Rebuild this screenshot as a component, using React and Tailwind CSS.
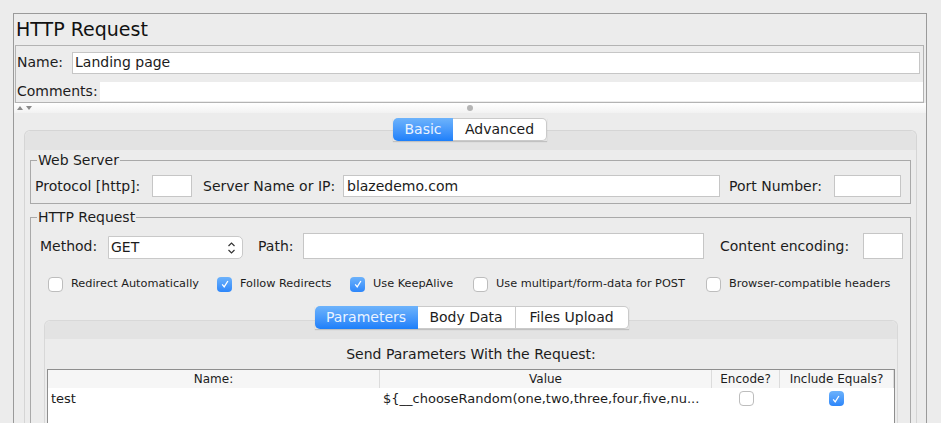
import React from "react";

const Check = ({ checked }) => (
  <span
    className={
      checked
        ? "flex h-[15px] w-[15px] shrink-0 items-center justify-center rounded-[4px] bg-linear-to-b from-[#6cb2fb] to-[#2c86fa]"
        : "h-[15px] w-[15px] shrink-0 rounded-[4px] border border-[#bdbdbd] bg-white"
    }
  >
    {checked && (
      <svg width="10" height="10" viewBox="0 0 10 10">
        <path d="M2.2 5.4 L4.2 7.8 L7.9 2" stroke="white" strokeWidth="1.3" fill="none" />
      </svg>
    )}
  </span>
);

const Option = ({ checked, label, width }) => (
  <div className={`flex items-center gap-[8px] ${width}`}>
    <Check checked={checked} />
    <span className="whitespace-nowrap">{label}</span>
  </div>
);

const App = () => {
  return (
    <div className="h-[423px] w-[941px] overflow-hidden bg-[#ececec] font-['DejaVu_Sans',sans-serif] text-[13px] text-[#1c1c1c]">
      <div className="ml-[13px] mt-[13px] h-[410px] w-[914px] border-x border-t border-[#9a9a9a]">
        {/* Title */}
        <div className="h-[31px] pl-[2px] pt-[3px] text-[19px] leading-[24px] text-[#111]">
          HTTP Request
        </div>

        {/* Name / Comments */}
        <div className="ml-[1px] mr-[2px] h-[58px] border border-[#b3b3b3]">
          <div className="flex h-[32px] items-center pl-[1px] pr-[3px] pt-[1px]">
            <span className="w-[55px] text-[14px]">Name:</span>
            <div className="flex h-[22px] flex-1 items-center border border-[#c6c6c6] bg-white pl-[2px] text-[14px]">
              Landing page
            </div>
          </div>
          <div className="mt-[4px] flex h-[19px] items-center pl-[1px]">
            <span className="w-[83px] text-[14px]">Comments:</span>
            <div className="h-full flex-1 bg-white" />
          </div>
        </div>

        {/* Splitter */}
        <div className="flex h-[10px] items-center bg-linear-to-b from-white to-[#f2f2f2] pl-[3px]">
          <svg width="16" height="6" viewBox="0 0 16 6">
            <path d="M0 5 L3 1 L6 5 Z" fill="#8a8a8a" />
            <path d="M9 1 L15 1 L12 5 Z" fill="#8a8a8a" />
          </svg>
          <div className="ml-[434px] h-[6px] w-[6px] rounded-full bg-[#b5b5b5]" />
        </div>

        {/* Basic / Advanced tabs */}
        <div className="relative z-10 mt-[5px] flex justify-center">
          <div className="flex h-[23px] text-[14px] shadow-[0_1px_1px_rgba(0,0,0,0.15)]">
            <div className="flex w-[60px] items-center justify-center rounded-l-[5px] bg-linear-to-b from-[#6db3fb] to-[#1c7ffa] text-[#eaf3ff]">
              Basic
            </div>
            <div className="flex w-[94px] items-center justify-center rounded-r-[5px] border border-l-0 border-[#cacaca] bg-white">
              Advanced
            </div>
          </div>
        </div>

        {/* Tab panel */}
        <div className="-mt-[11px] ml-[10px] mr-[9px] h-[300px] rounded-t-[6px] border border-b-0 border-[#d5d5d5]">
          <div className="h-[19px] rounded-t-[6px] bg-[#e3e3e3]" />
          <div className="px-[5px]">
            {/* Web Server */}
            <fieldset className="mt-[2px] border border-[#a9a9a9] pb-[6px] pl-[4px] pr-[9px]">
              <legend className="ml-[2px] px-[1px] text-[14px] leading-[16px]">Web Server</legend>
              <div className="mt-[7px] flex h-[22px] items-center text-[14px]">
                <span className="w-[117px] whitespace-nowrap">Protocol [http]:</span>
                <div className="h-[22px] w-[40px] border border-[#c6c6c6] bg-white" />
                <span className="ml-[11px] w-[140px] whitespace-nowrap">Server Name or IP:</span>
                <div className="flex h-[22px] w-[377px] items-center border border-[#c6c6c6] bg-white pl-[3px]">
                  blazedemo.com
                </div>
                <span className="ml-[9px] w-[105px] whitespace-nowrap">Port Number:</span>
                <div className="h-[22px] flex-1 border border-[#c6c6c6] bg-white" />
              </div>
            </fieldset>

            {/* HTTP Request */}
            <fieldset className="mt-[5px] h-[240px] border border-[#a9a9a9] pl-[9px] pr-[7px]">
              <legend className="ml-[-3px] px-[1px] text-[14px] leading-[16px]">HTTP Request</legend>
              <div className="mt-[8px] flex h-[26px] items-center text-[14px]">
                <span className="w-[68px]">Method:</span>
                <div className="mt-[3px] flex h-[23px] w-[135px] items-center justify-between rounded-r-[5px] border border-[#c9c9c9] bg-white pl-[2px] pr-[6px]">
                  <span>GET</span>
                  <svg width="9" height="14" viewBox="0 0 9 14">
                    <path d="M1.5 5 L4.5 2 L7.5 5 M1.5 9 L4.5 12 L7.5 9" stroke="#333" strokeWidth="1.2" fill="none" />
                  </svg>
                </div>
                <span className="ml-[15px] w-[45px]">Path:</span>
                <div className="h-[26px] w-[401px] border border-[#c6c6c6] bg-white" />
                <span className="ml-[16px] w-[143px] whitespace-nowrap">Content encoding:</span>
                <div className="h-[26px] flex-1 border border-[#c6c6c6] bg-white" />
              </div>

              <div className="mt-[17px] flex h-[16px] items-center pl-[8px] text-[11.3px]">
                <Option label="Redirect Automatically" width="w-[169px]" />
                <Option checked label="Follow Redirects" width="w-[133px]" />
                <Option checked label="Use KeepAlive" width="w-[123px]" />
                <Option label="Use multipart/form-data for POST" width="w-[233px]" />
                <Option label="Browser-compatible headers" width="w-[180px]" />
              </div>

              {/* Parameters tabs */}
              <div className="relative z-10 mt-[14px] flex justify-center">
                <div className="flex h-[23px] text-[14px] shadow-[0_1px_1px_rgba(0,0,0,0.15)]">
                  <div className="flex w-[103px] items-center justify-center rounded-l-[5px] bg-linear-to-b from-[#6db3fb] to-[#1c7ffa] text-[#eaf3ff]">
                    Parameters
                  </div>
                  <div className="flex w-[98px] items-center justify-center border border-l-0 border-[#cacaca] bg-white">
                    Body Data
                  </div>
                  <div className="flex w-[113px] items-center justify-center rounded-r-[5px] border border-l-0 border-[#cacaca] bg-white">
                    Files Upload
                  </div>
                </div>
              </div>

              <div className="-mt-[9px] ml-[4px] mr-[5px] h-[120px] rounded-t-[6px] border border-b-0 border-[#d8d8d8]">
                <div className="h-[18px] rounded-t-[6px] bg-[#e3e3e3]" />
                <div className="flex h-[30px] items-center justify-center text-[14px]">
                  Send Parameters With the Request:
                </div>
                <div className="mx-[2px] h-[80px] border-x border-t border-[#8e8e8e] bg-white text-[12px]">
                  <div className="flex h-[18px] items-center bg-[#f6f6f6]">
                    <div className="w-[332px] border-r border-[#dcdcdc] text-center">Name:</div>
                    <div className="w-[332px] border-r border-[#dcdcdc] text-center">Value</div>
                    <div className="w-[68px] border-r border-[#dcdcdc] text-center">Encode?</div>
                    <div className="flex-1 border-r border-[#dcdcdc] text-center">Include Equals?</div>
                  </div>
                  <div className="flex h-[21px] items-center text-[13px]">
                    <div className="w-[332px] pl-[3px]">test</div>
                    <div className="w-[332px] truncate pl-[3px]">
                      {"${__chooseRandom(one,two,three,four,five,nu..."}
                    </div>
                    <div className="flex w-[68px] justify-center">
                      <Check />
                    </div>
                    <div className="flex flex-1 justify-center pr-[2px]">
                      <Check checked />
                    </div>
                  </div>
                </div>
              </div>
            </fieldset>
          </div>
        </div>
      </div>
    </div>
  );
};

export default App;
